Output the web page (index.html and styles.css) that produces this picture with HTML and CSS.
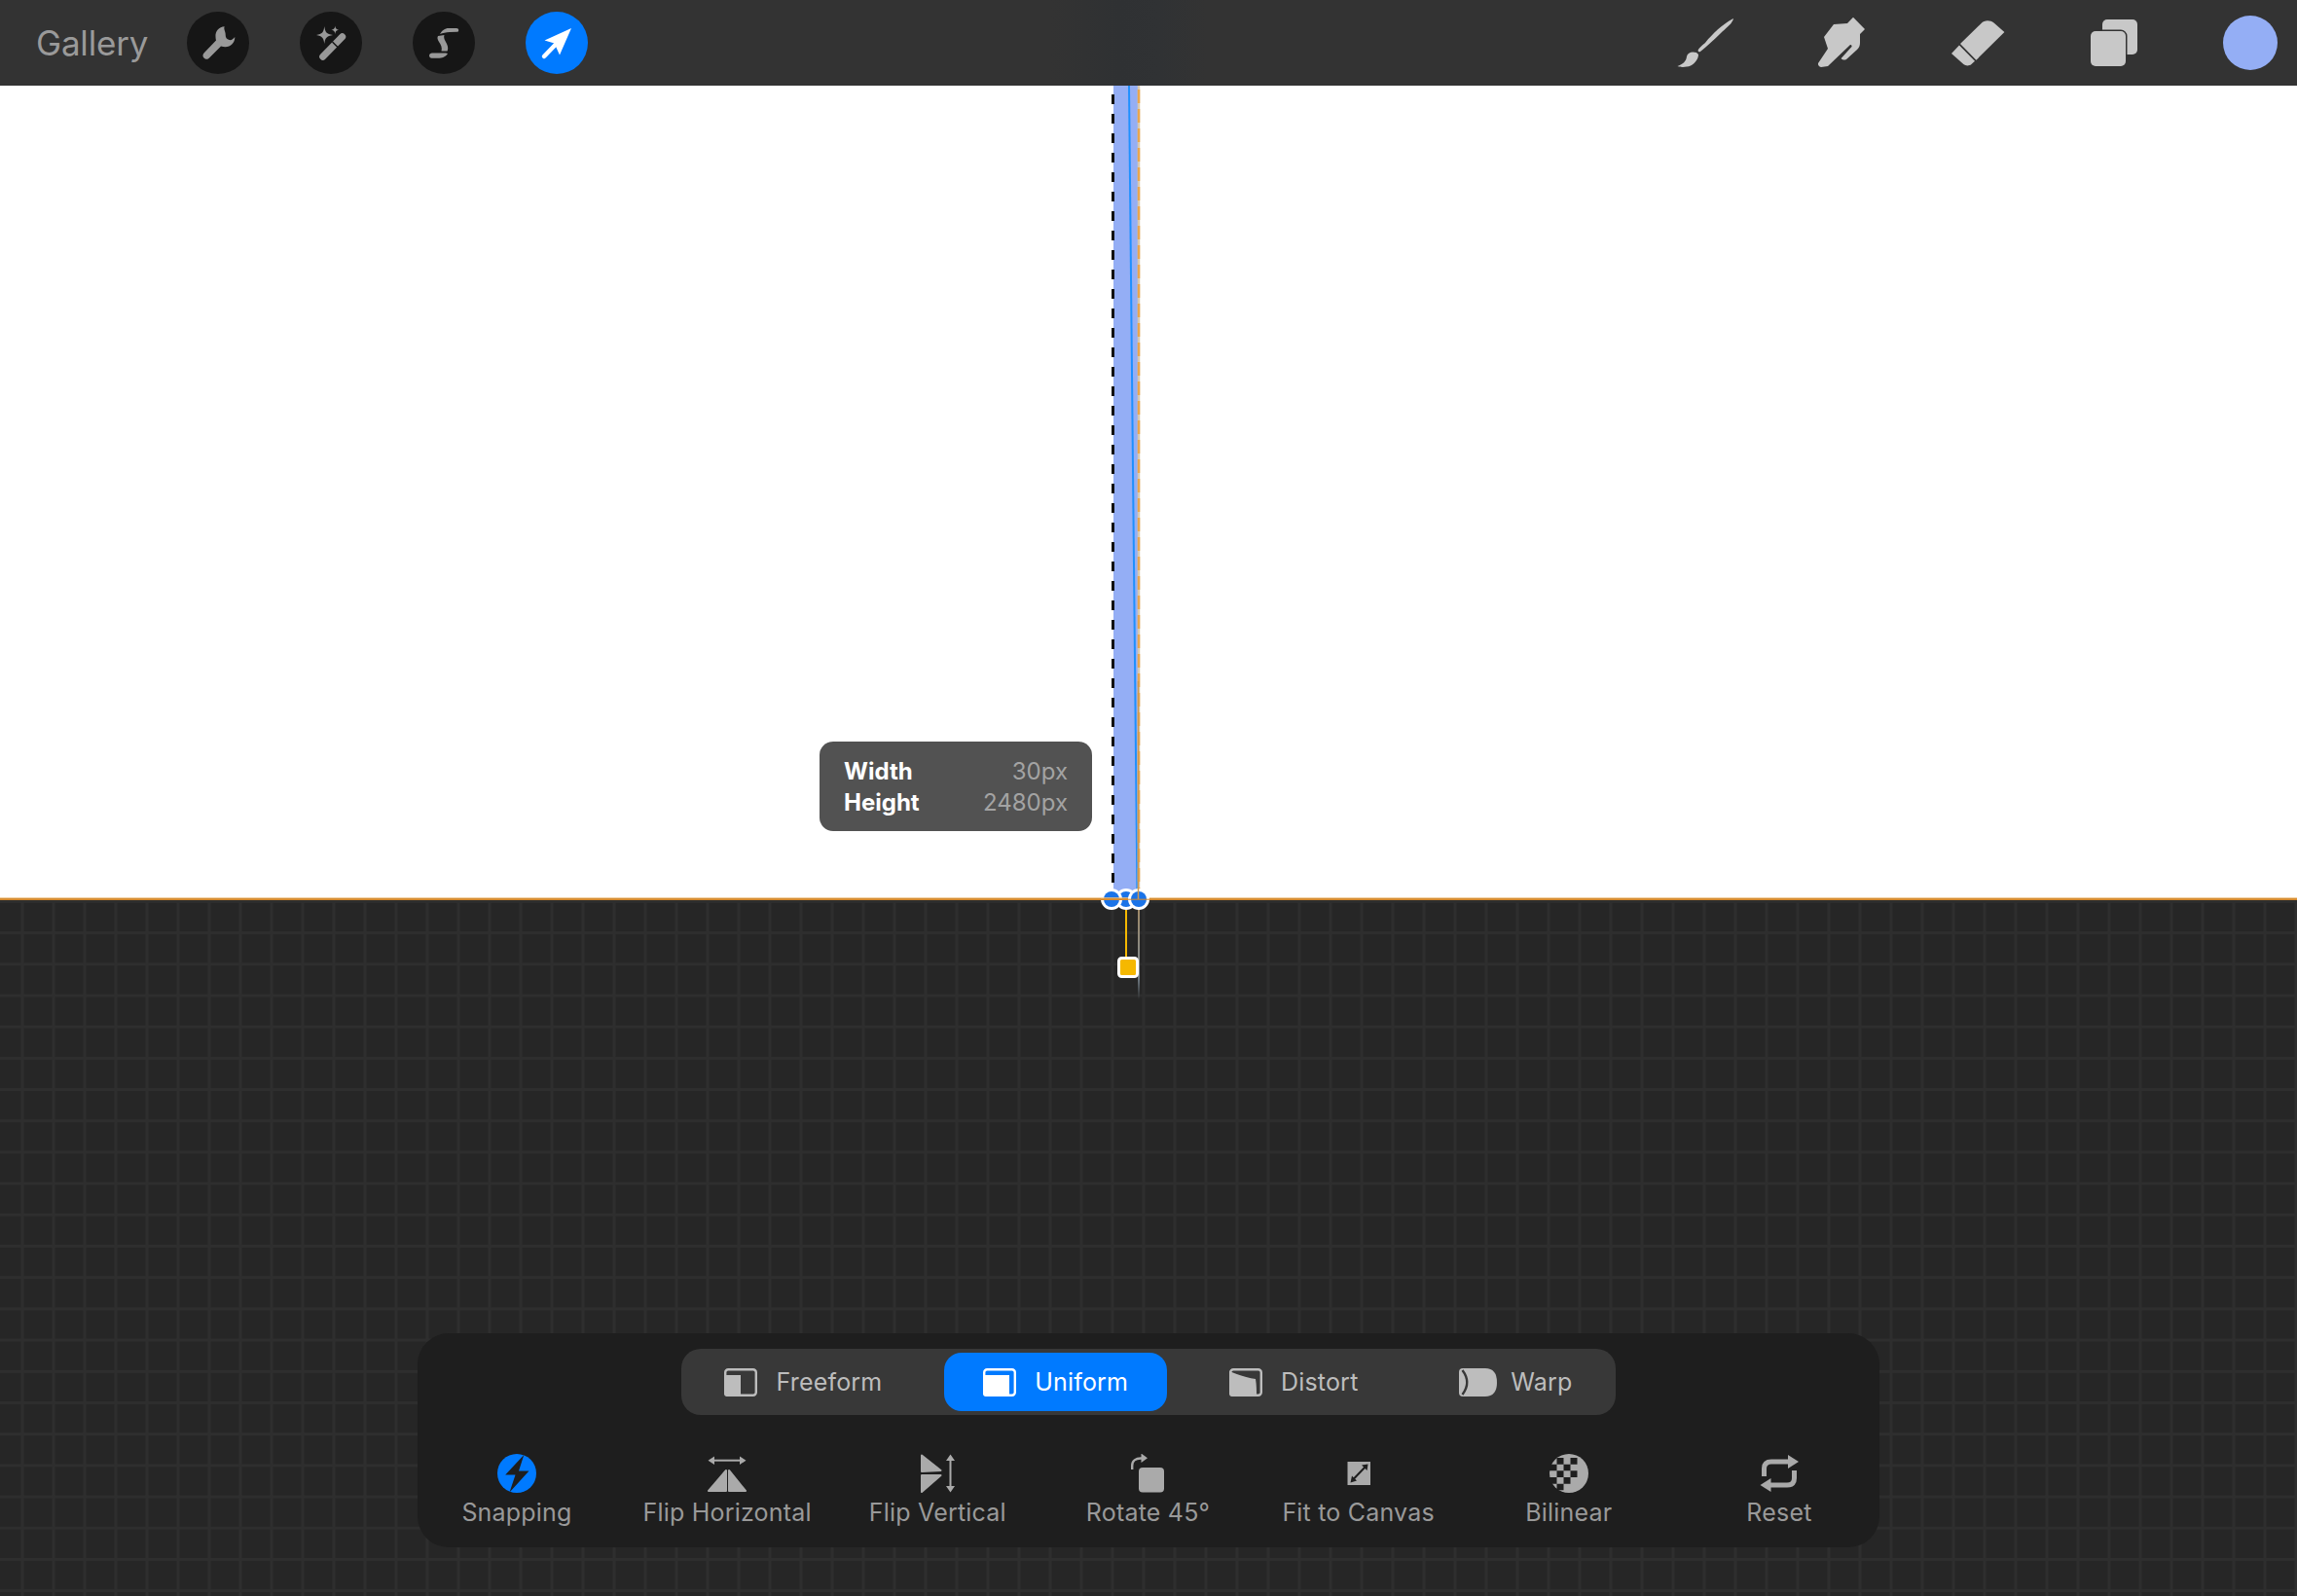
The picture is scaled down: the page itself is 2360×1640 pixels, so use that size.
FILE: index.html
```html
<!DOCTYPE html>
<html lang="en">
<head>
<meta charset="utf-8">
<title>Transform</title>
<link rel="stylesheet" href="styles.css">
</head>
<body>
<div class="app">
  <header class="topbar">
    <div class="tools-left">
      <span class="gallery">Gallery</span>
      <span class="round-btn">
        <svg class="round-ico" viewBox="0 0 64 64"><path class="g-mid" d="M38.7 15.3C33 15.5 29 20 29.5 26C29.6 27.5 29.7 28.5 30 29.5L18 42C16 44 16 46 17.5 47.5C19 49 21.5 49.3 23 47.5L35 35.5C36.5 36 38 36.3 39.5 36.3C45 36.3 49.5 31.5 49.3 26C47.5 28.5 45.5 29.5 43.5 29C41 28.5 39.5 26.5 39.7 23.5C39.8 20.5 37.5 18 38.7 15.3Z"/></svg>
      </span>
      <span class="round-btn">
        <svg class="round-ico" viewBox="0 0 64 64"><path class="g-mid" d="M25.3 15C26 21 27.5 23 34 24C27.5 25 26 27 25.3 33C24.6 27 23 25 17 24C23 23 24.6 21 25.3 15Z"/><path class="g-mid" d="M36.3 14.5C36.6 17.2 37.3 18 40 18.7C37.3 19.3 36.6 20.2 36.3 23C36 20.2 35.3 19.3 32.5 18.7C35.3 18 36 17.2 36.3 14.5Z"/><path class="wand-stroke" d="M23.7 46.2L43.7 25.8"/><path class="wand-gap" d="M33.5 31L39.5 37"/></svg>
      </span>
      <span class="round-btn">
        <svg class="round-ico" viewBox="0 0 64 64"><path class="g-mid" d="M28 23C30 19.5 33 17 37 17L45 17C47.8 17 48 20.8 45.5 20.8L38 21C34 21 31 22 28 23Z"/><path class="g-mid" d="M26 25L32.5 24C31.5 27 33 29 35 33C36.5 36 36.5 39 35.5 40.5L29.5 40.5C30.5 37 29 34 27 31C25.5 28.5 25 26.5 26 25Z"/><path class="g-mid" d="M17 45C17 43.5 18.5 42.5 20 42.5L34 42.5L36 43C34 46.5 30 47.8 26 47.8L19.5 47.8C18 47.8 17 46.5 17 45Z"/></svg>
      </span>
      <span class="round-btn is-active">
        <svg class="round-ico" viewBox="0 0 64 64"><path class="white" d="M47 17L19.5 29.5L29.5 32.5L35 44.5Z"/><path class="arrow-shaft" d="M19 46L32 32.5"/></svg>
      </span>
    </div>
    <div class="tools-right">
      <svg class="ico-brush" viewBox="1720 15 64 58"><path class="g-light" d="M1781 19C1770 25 1760 34 1752 44C1748 47 1745 50 1744.5 52C1745 53.5 1746 53.5 1747 53C1753 48 1761 41 1768 34C1774 28 1780 24 1781 19Z"/><path class="g-light" d="M1743 54C1738 52.5 1734 54 1733 58C1732.5 63 1729 66 1723.5 68C1725 69 1732 69.5 1737 67.5C1742 65 1745 60 1745 56Z"/></svg>
      <svg class="ico-smudge" viewBox="1864 15 56 58"><path class="g-light" d="M1904 17.7L1916 30L1911 35L1911 44C1911 47 1910 49 1908 51L1897 61C1895 62 1892.5 61.5 1891.6 60L1902.5 48C1903 47 1902 45.5 1901 46L1878 68L1871 69C1869 68.5 1867.5 66.5 1868 65L1878 50L1874 38L1884 25L1898 24Z"/></svg>
      <svg class="ico-eraser" viewBox="2000 15 64 58"><path class="g-light" d="M2035.6 24C2038.5 20.5 2045 20.5 2048.6 23.5L2059.4 33L2030.4 61.7L2014 45Z"/><path class="g-light" d="M2013 46.5L2029 62.8L2025.5 66C2023 68 2019.5 67.8 2017.4 66L2005 55Z"/></svg>
      <svg class="ico-layers" viewBox="2144 15 60 58"><rect class="g-light" x="2160" y="20" width="36" height="36" rx="5"/><rect class="layer-front" x="2148" y="32" width="36" height="36" rx="5"/></svg>
      <span class="swatch"></span>
    </div>
  </header>

  <main class="canvas">
    <div class="size-tip">
      <b class="tip-key">Width</b><span class="tip-val">30px</span>
      <b class="tip-key">Height</b><span class="tip-val">2480px</span>
    </div>
  </main>

  <section class="pasteboard">
    <div class="panel">
      <div class="segments">
        <div class="seg">
          <svg class="seg-ico" viewBox="744 1404 34 29"><rect class="tab-line" x="745.2" y="1405.2" width="31.6" height="26.6" rx="3"/><path class="g-tab" d="M744 1411H761V1433H747Q744 1433 744 1430Z"/></svg>
          <span>Freeform</span>
        </div>
        <div class="seg is-on">
          <svg class="seg-ico" viewBox="1010 1404 34 29"><rect class="tab-line-w" x="1011.2" y="1405.2" width="31.6" height="26.6" rx="3"/><path class="white" d="M1010 1411H1037V1433H1013Q1010 1433 1010 1430Z"/></svg>
          <span>Uniform</span>
        </div>
        <div class="seg">
          <svg class="seg-ico" viewBox="1263 1404 34 29"><rect class="tab-line" x="1264.2" y="1405.2" width="31.6" height="26.6" rx="3"/><path class="g-tab" d="M1263 1407C1272 1411 1282 1414 1290 1415C1291 1421 1291 1427 1291 1433H1266Q1263 1433 1263 1430Z"/></svg>
          <span>Distort</span>
        </div>
        <div class="seg seg-warp">
          <svg class="seg-ico seg-ico-wide" viewBox="1501 1404 39 29"><path class="g-tab" d="M1505 1404H1528Q1540 1404 1540 1418.5Q1540 1433 1528 1433H1505Q1501 1433 1501 1429V1408Q1501 1404 1505 1404Z"/><path class="warp-arc" d="M1504.5 1406Q1514 1418.5 1504.5 1431"/></svg>
          <span>Warp</span>
        </div>
      </div>
      <div class="actions">
        <div class="act">
          <svg class="act-ico" viewBox="512 1494 40 40"><circle class="blue" cx="532" cy="1514" r="20"/><path class="panel-fill" d="M539.3 1495L520.2 1515.5H530.5L524.5 1533.5L544.5 1511.5H534Z"/></svg>
          <span>Snapping</span>
        </div>
        <div class="act">
          <svg class="act-ico" viewBox="728 1494 40 40"><path class="act-line" d="M732 1500.7H764"/><path class="g-act" d="M728.5 1500.7L735 1496.5V1505ZM767.5 1500.7L761 1496.5V1505Z"/><path class="g-act-r" d="M747 1511L729 1532H747ZM750 1511L767 1532H750Z"/></svg>
          <span>Flip Horizontal</span>
        </div>
        <div class="act">
          <svg class="act-ico" viewBox="946 1494 36 40"><path class="g-act-r" d="M948 1495.5L967.5 1511L948 1512ZM948 1516H967.5L948 1533Z"/><path class="act-line" d="M977.5 1498V1530"/><path class="g-act" d="M977.5 1494.5L973 1501H982ZM977.5 1533.5L973 1527H982Z"/></svg>
          <span>Flip Vertical</span>
        </div>
        <div class="act">
          <svg class="act-ico" viewBox="1160 1494 40 40"><rect class="g-act" x="1171" y="1508" width="26" height="25.5" rx="4"/><path class="act-arc" d="M1164.2 1510V1506C1164.2 1501 1168 1498.5 1173 1498.5H1175"/><path class="g-act" d="M1180 1498.3L1173.5 1493.5V1503Z"/></svg>
          <span>Rotate 45°</span>
        </div>
        <div class="act">
          <svg class="act-ico" viewBox="1376 1494 40 40"><rect class="g-act" x="1384.5" y="1502" width="23.5" height="24"/><path class="fit-line" d="M1390 1520.5L1403 1507"/><path class="panel-fill" d="M1387.5 1523.5L1389 1516.5L1394 1521.5ZM1405.5 1504.5L1399 1505.5L1404.5 1511Z"/></svg>
          <span>Fit to Canvas</span>
        </div>
        <div class="act">
          <svg class="act-ico" viewBox="1592 1494 40 40"><circle class="g-act" cx="1612" cy="1514" r="20"/><path class="panel-fill" d="M1599.5 1498h7v6.7h-7zM1613.5 1498h7v6.7h-7zM1592 1504.7h7.5v6.6h-7.5zM1606.5 1504.7h7v6.6h-7zM1599.5 1511.3h7v6.7h-7zM1613.5 1511.3h7v6.7h-7zM1592 1518h7.5v6.7h-7.5zM1606.5 1518h7v6.7h-7zM1599.5 1524.7h7v6.6h-7z"/></svg>
          <span>Bilinear</span>
        </div>
        <div class="act">
          <svg class="act-ico" viewBox="1808 1494 40 40"><path class="reset-line" d="M1812.5 1517V1509C1812.5 1504.5 1815 1502 1820 1502H1838"/><path class="g-act" d="M1848 1502L1837 1495V1509Z"/><path class="reset-line" d="M1843.5 1511V1519C1843.5 1523.5 1841 1526 1836 1526H1818"/><path class="g-act" d="M1808.5 1526L1819.5 1519V1533Z"/></svg>
          <span>Reset</span>
        </div>
      </div>
    </div>
  </section>

  <svg class="overlay" viewBox="0 0 2360 1640">
    <defs>
      <linearGradient id="fade" x1="0" y1="0" x2="0" y2="1">
        <stop offset="0" stop-color="#a58a62"/>
        <stop offset="0.75" stop-color="#7d8a94"/>
        <stop offset="1" stop-color="#7d8a94" stop-opacity="0"/>
      </linearGradient>
    </defs>
    <rect class="shape" x="1144" y="88" width="26" height="830"/>
    <path class="shape-axis" d="M1160 88L1168.5 925"/>
    <path class="dash-black" d="M1143.5 97V912"/>
    <path class="dash-base" d="M1170 88V925"/>
    <path class="dash-orange" d="M1170 92V925"/>
    <rect class="fade-line" x="1169" y="925" width="2" height="102" fill="url(#fade)"/>
    <circle class="h-ring" cx="1157" cy="924" r="11"/><circle class="h-dot" cx="1157" cy="924" r="8"/>
    <circle class="h-ring" cx="1142" cy="924" r="11"/><circle class="h-dot" cx="1142" cy="924" r="8"/>
    <path class="orange-a" d="M0 923H2360"/>
    <path class="orange-b" d="M0 924.2H1165M1181 924.2H2360"/>
    <path class="pin" d="M1157 935V984"/>
    <rect class="pin-sq" x="1149.5" y="984.5" width="19" height="19" rx="3"/>
    <circle class="h-ring" cx="1170" cy="924" r="11"/><circle class="h-dot" cx="1170" cy="924" r="8"/>
    <path class="dash-thin" d="M1169.5 700V924"/>
    <path class="orange-thin" d="M1158 924.2H1181"/>
  </svg>
</div>
</body>
</html>
```

FILE: styles.css
```css
* { box-sizing: border-box; }
html, body { margin: 0; padding: 0; background: #262626; }
body { font-family: Inter, "Liberation Sans", sans-serif; overflow: hidden; }
svg { display: block; }

.app { position: relative; width: 2360px; height: 1640px; display: flex; flex-direction: column; }

/* top bar */
.topbar {
  height: 88px; flex: none; display: flex; justify-content: space-between; align-items: center;
  padding: 0 20px 0 37px;
  background: linear-gradient(90deg, #333 0, #333 1080px, #2f3133 1150px, #303234 1190px, #333 1240px, #333 100%);
}
.tools-left { display: flex; align-items: center; gap: 52px; }
.gallery { width: 103px; font-size: 35px; line-height: 44px; color: #9a9a9a; letter-spacing: -0.2px; white-space: nowrap; }
.round-btn { width: 64px; height: 64px; border-radius: 50%; background: #161616; flex: none; }
.round-btn.is-active { background: #007aff; }
.round-ico { width: 64px; height: 64px; }
.g-mid { fill: #999; }
.white { fill: #fff; }
.wand-stroke { stroke: #999; stroke-width: 7; stroke-linecap: round; fill: none; }
.wand-gap { stroke: #161616; stroke-width: 1.5; fill: none; }
.arrow-shaft { stroke: #fff; stroke-width: 4.5; stroke-linecap: round; fill: none; }

.tools-right { display: flex; align-items: center; gap: 80px; }
.ico-brush, .ico-eraser { width: 64px; height: 58px; }
.ico-smudge { width: 56px; height: 58px; }
.ico-layers { width: 60px; height: 58px; }
.g-light { fill: #c8c8c8; }
.layer-front { fill: #c8c8c8; stroke: #333; stroke-width: 3; paint-order: stroke; }
.swatch { width: 56px; height: 56px; border-radius: 50%; background: #94aef5; flex: none; }

/* canvas */
.canvas { position: relative; height: 835px; flex: none; background: #fff; }
.size-tip {
  position: absolute; left: 842px; top: 674px; width: 280px; height: 92px;
  display: grid; grid-template-columns: auto auto; justify-content: space-between; align-content: center;
  padding: 2px 25px 0; border-radius: 14px; background: #525252;
  font-size: 24px; line-height: 32px;
}
.tip-key { color: #fff; font-weight: 700; }
.tip-val { color: #a3a3a3; text-align: right; }

/* pasteboard */
.pasteboard {
  flex: 1; display: flex; justify-content: center; align-items: flex-end; padding-bottom: 50px;
  background-color: #262626;
  background-image:
    linear-gradient(90deg, #2e2e2e 3px, transparent 3px),
    linear-gradient(#2e2e2e 3px, transparent 3px);
  background-size: 32px 32.2px;
  background-position: 21.5px 2px;
}
.panel {
  width: 1502px; height: 220px; padding-top: 16px; flex: none;
  display: flex; flex-direction: column; align-items: center;
  border-radius: 32px; background: #1e1e1e;
}
.segments {
  height: 68px; display: flex; align-items: center; gap: 23.7px;
  padding: 0 4px; border-radius: 20px; background: #383838;
}
.seg {
  height: 60px; padding: 0 40px; display: flex; align-items: center; gap: 19px;
  border-radius: 18px; color: #bdbdbd; font-size: 25px; letter-spacing: 0.2px; white-space: nowrap;
}
.seg-warp { gap: 14px; }
.seg.is-on { background: #007aff; color: #fff; }
.seg-ico { width: 34px; height: 29px; flex: none; }
.seg-ico-wide { width: 39px; }
.tab-line { fill: none; stroke: #bdbdbd; stroke-width: 2.4; }
.tab-line-w { fill: none; stroke: #fff; stroke-width: 2.4; }
.g-tab { fill: #bdbdbd; }
.warp-arc { fill: none; stroke: #383838; stroke-width: 2.4; }

.actions { align-self: stretch; margin-top: 40px; padding: 0 3px 0 2px; display: flex; justify-content: space-between; }
.act { width: 200px; display: flex; flex-direction: column; align-items: center; color: #999; font-size: 25px; letter-spacing: 0.2px; line-height: 32px; white-space: nowrap; }
.act-ico { height: 40px; margin-bottom: 4px; }
.blue { fill: #007aff; }
.panel-fill { fill: #1e1e1e; }
.g-act { fill: #aaa; }
.g-act-r { fill: #aaa; stroke: #aaa; stroke-width: 2; stroke-linejoin: round; }
.act-line { stroke: #aaa; stroke-width: 2; fill: none; }
.act-arc { stroke: #aaa; stroke-width: 2.4; fill: none; }
.fit-line { stroke: #1e1e1e; stroke-width: 2; fill: none; }
.reset-line { stroke: #aaa; stroke-width: 5; fill: none; }

/* transform overlay */
.overlay { position: absolute; left: 0; top: 0; width: 2360px; height: 1640px; pointer-events: none; }
.shape { fill: #94aef5; }
.shape-axis { stroke: #1e90ff; stroke-width: 2; fill: none; }
.dash-black { stroke: #111; stroke-width: 3; stroke-dasharray: 10 10; fill: none; }
.dash-base { stroke: #d9c9b0; stroke-width: 2.5; fill: none; }
.dash-orange { stroke: #e9a64e; stroke-width: 2.5; stroke-dasharray: 14 6; fill: none; }
.dash-thin { stroke: #d09a50; stroke-width: 1.5; fill: none; }
.orange-a { stroke: #f0c080; stroke-width: 1.5; fill: none; }
.orange-b { stroke: #d98a2a; stroke-width: 1.8; fill: none; }
.orange-thin { stroke: #d98a2a; stroke-width: 1; fill: none; }
.h-ring { fill: #fff; }
.h-dot { fill: #1a73e8; }
.pin { stroke: #f5b800; stroke-width: 2; fill: none; }
.pin-sq { fill: #f5b800; stroke: #fff; stroke-width: 3; }
```
